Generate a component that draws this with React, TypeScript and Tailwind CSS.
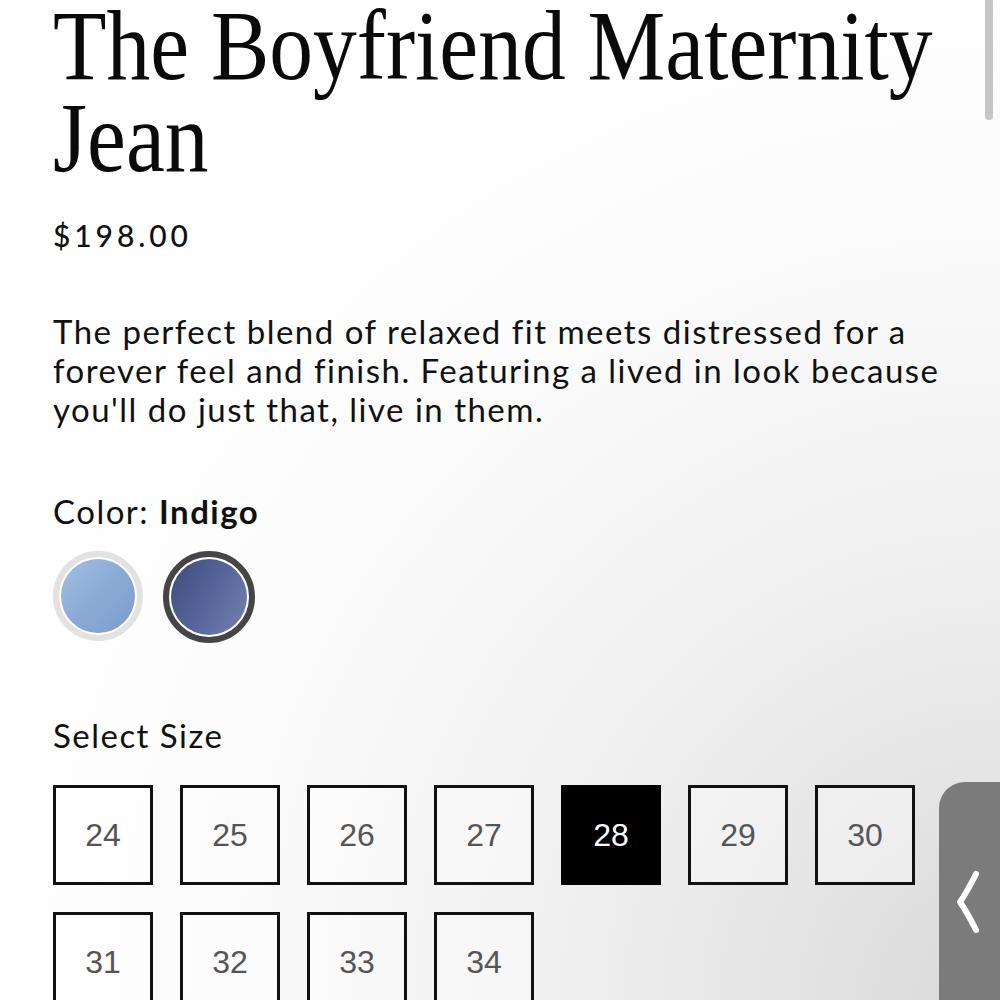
import React from "react";

const sizes = [24, 25, 26, 27, 28, 29, 30, 31, 32, 33, 34];
const selectedSize = 28;

const sans = { fontFamily: "Lato, 'Noto Sans', sans-serif" };

export default function App() {
  return (
    <div className="relative h-[1000px] w-full overflow-hidden bg-[radial-gradient(circle_at_100%_100%,#d9d9d9_0%,#efefef_30%,#fbfbfb_55%,#ffffff_75%)] text-black">
      <div className="pl-[53px]">
        <h1
          className="origin-left scale-x-[0.875] whitespace-nowrap text-[100px] leading-[92px] font-normal text-[#0a0a0a]"
          style={{ fontFamily: "'Liberation Serif', 'DejaVu Serif', serif" }}
        >
          The Boyfriend Maternity
          <br />
          Jean
        </h1>

        <div className="mt-[33px] text-[30px] leading-[36px] font-medium tracking-[0.13em] text-[#111]" style={sans}>
          $198.00
        </div>

        <p className="mt-[59px] whitespace-nowrap text-[33px] leading-[39px] tracking-[0.045em] text-[#111]" style={sans}>
          The perfect blend of relaxed fit meets distressed for a
          <br />
          forever feel and finish. Featuring a lived in look because
          <br />
          you'll do just that, live in them.
        </p>

        <div className="mt-[64px] text-[33px] leading-[36px] tracking-[0.045em] text-[#111]" style={sans}>
          Color: <span className="font-bold">Indigo</span>
        </div>

        <div className="mt-[22px] flex gap-[20px]">
          <button className="h-[90px] w-[90px] rounded-full border-[6px] border-[#e2e2e2] bg-white p-[2px]">
            <span className="block h-full w-full rounded-full bg-[linear-gradient(135deg,#a3bfe2_0%,#8aaad6_50%,#7c9dcc_100%)]" />
          </button>
          <button className="h-[92px] w-[92px] rounded-full border-[6px] border-[#454545] bg-white p-[2px]">
            <span className="block h-full w-full rounded-full bg-[linear-gradient(120deg,#3d4b7a_0%,#56649a_50%,#7482b0_100%)]" />
          </button>
        </div>

        <div className="mt-[74px] text-[33px] leading-[36px] tracking-[0.045em] text-[#111]" style={sans}>
          Select Size
        </div>

        <div className="mt-[32px] grid w-[862px] grid-cols-7 gap-[27px]">
          {sizes.map((s) => (
            <div
              key={s}
              className={
                s === selectedSize
                  ? "flex h-[100px] w-[100px] items-center justify-center bg-black text-[32px] text-white"
                  : "flex h-[100px] w-[100px] items-center justify-center border-[3px] border-[#111] bg-white/40 text-[32px] text-[#555]"
              }
              style={{ fontFamily: "'Liberation Sans', Arial, sans-serif" }}
            >
              {s}
            </div>
          ))}
        </div>
      </div>

      {/* scrollbar */}
      <div className="absolute left-[985px] top-0 h-[120px] w-[8px] rounded-b-full bg-[#c6c6c6]" />

      {/* side pull tab */}
      <div className="absolute left-[939px] top-[782px] h-[240px] w-[70px] rounded-tl-[26px] bg-[#7b7b7b]">
        <svg className="absolute left-[16px] top-[86px]" width="28" height="70" viewBox="0 0 28 70" fill="none">
          <path d="M21 6 C16 16 12 24 5 34 C12 44 16 52 21 62" stroke="white" strokeWidth="6" strokeLinecap="round" strokeLinejoin="round" />
        </svg>
      </div>
    </div>
  );
}
